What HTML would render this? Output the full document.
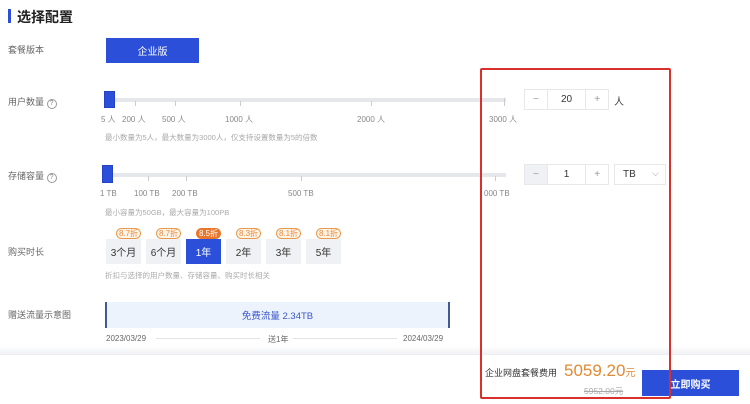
<!DOCTYPE html>
<html><head><meta charset="utf-8"><style>
*{margin:0;padding:0;box-sizing:border-box}
body{width:750px;height:404px;background:#fff;font-family:"Liberation Sans","Noto Sans CJK SC",sans-serif;position:relative;overflow:hidden;color:#333}
.a{position:absolute;white-space:nowrap}
.lbl{font-size:9px;color:#666}
.tk{position:absolute;width:1px;height:5px;background:#ccc}
.tl{font-size:8px;color:#888}
.hint{font-size:7.5px;color:#aaa}
.trk{position:absolute;height:4px;background:#e6e7ea}
.th{position:absolute;background:#2b4fd8;border:1px solid #2244c4}
.st{position:absolute;border:1px solid #e8e8ea;height:21px;display:flex;font-size:10px;color:#333}
.st div{display:flex;align-items:center;justify-content:center;border-right:1px solid #e8e8ea}
.st div:last-child{border-right:none}
.box{position:absolute;top:239px;width:35px;height:25px;background:#f0f1f4;font-size:10px;display:flex;align-items:center;justify-content:center;color:#333}
.bd{position:absolute;top:228px;height:11px;width:25px;border:1px solid #e89a4c;border-radius:6px;background:#fff4e8;color:#e8893a;font-size:8px;display:flex;align-items:center;justify-content:center}
</style></head><body>
<div class="a" style="left:8px;top:9px;width:3px;height:14px;background:#2b4fd8"></div>
<div class="a" style="left:17px;top:7px;font-size:14px;color:#222;font-weight:bold">选择配置</div>

<div class="a lbl" style="left:8px;top:43px">套餐版本</div>
<div class="a" style="left:106px;top:38px;width:93px;height:25px;background:#2b4fd8;color:#fff;font-size:10px;display:flex;align-items:center;justify-content:center">企业版</div>

<div class="a lbl" style="left:8px;top:95px">用户数量 <span style="display:inline-block;width:10px;height:10px;border:1px solid #999;border-radius:50%;font-size:7px;text-align:center;line-height:8px;color:#888">?</span></div>
<div class="trk" style="left:104px;top:98px;width:402px"></div>
<div class="th" style="left:104px;top:91px;width:11px;height:17px"></div>
<div class="tk" style="left:135px;top:101px"></div><div class="tk" style="left:175px;top:101px"></div><div class="tk" style="left:240px;top:101px"></div><div class="tk" style="left:371px;top:101px"></div><div class="tk" style="left:504px;top:98px;height:8px"></div>
<div class="a tl" style="left:101px;top:114px">5 人</div><div class="a tl" style="left:122px;top:114px">200 人</div><div class="a tl" style="left:162px;top:114px">500 人</div><div class="a tl" style="left:225px;top:114px">1000 人</div><div class="a tl" style="left:357px;top:114px">2000 人</div><div class="a tl" style="left:489px;top:114px">3000 人</div>
<div class="a hint" style="left:105px;top:132px">最小数量为5人，最大数量为3000人，仅支持设置数量为5的倍数</div>

<div class="st" style="left:524px;top:89px;width:85px"><div style="width:23px;color:#999">−</div><div style="width:39px">20</div><div style="width:22px;color:#999">+</div></div>
<div class="a" style="left:614px;top:93px;font-size:10px;color:#444">人</div>

<div class="a lbl" style="left:8px;top:169px">存储容量 <span style="display:inline-block;width:10px;height:10px;border:1px solid #999;border-radius:50%;font-size:7px;text-align:center;line-height:8px;color:#888">?</span></div>
<div class="trk" style="left:102px;top:173px;width:404px"></div>
<div class="th" style="left:102px;top:165px;width:11px;height:18px"></div>
<div class="tk" style="left:148px;top:176px"></div><div class="tk" style="left:186px;top:176px"></div><div class="tk" style="left:301px;top:176px"></div><div class="tk" style="left:495px;top:176px"></div>
<div class="a tl" style="left:100px;top:189px">1 TB</div><div class="a tl" style="left:134px;top:189px">100 TB</div><div class="a tl" style="left:172px;top:189px">200 TB</div><div class="a tl" style="left:288px;top:189px">500 TB</div><div class="a tl" style="left:484px;top:189px">000 TB</div>
<div class="a hint" style="left:105px;top:207px">最小容量为50GB，最大容量为100PB</div>

<div class="st" style="left:524px;top:164px;width:85px"><div style="width:23px;color:#999;background:#f0f1f4">−</div><div style="width:39px">1</div><div style="width:22px;color:#999">+</div></div>
<div class="a" style="left:614px;top:164px;width:52px;height:21px;border:1px solid #e8e8ea;font-size:10px;padding-left:8px;line-height:19px">TB<span style="position:absolute;right:6px;top:-1px;color:#999;font-size:9px">⌵</span></div>

<div class="a lbl" style="left:8px;top:245px">购买时长</div>
<div class="box" style="left:106px">3个月</div><div class="box" style="left:146px">6个月</div><div class="box" style="left:186px;background:#2b4fd8;color:#fff">1年</div><div class="box" style="left:226px">2年</div><div class="box" style="left:266px">3年</div><div class="box" style="left:306px">5年</div>
<div class="bd" style="left:116px">8.7折</div><div class="bd" style="left:156px">8.7折</div><div class="bd" style="left:196px;background:#e8762a;color:#fff;border-color:#e8762a">8.5折</div><div class="bd" style="left:236px">8.3折</div><div class="bd" style="left:276px">8.1折</div><div class="bd" style="left:316px">8.1折</div>
<div class="a hint" style="left:105px;top:270px">折扣与选择的用户数量、存储容量、购买时长相关</div>

<div class="a lbl" style="left:8px;top:308px">赠送流量示意图</div>
<div class="a" style="left:105px;top:302px;width:345px;height:26px;background:#edf3fd;border-left:2px solid #44598f;border-right:2px solid #44598f;color:#3a56c8;font-size:9.5px;display:flex;align-items:center;justify-content:center">免费流量 2.34TB</div>
<div class="a tl" style="left:106px;top:334px;color:#666">2023/03/29</div>
<div class="a" style="left:156px;top:338px;width:104px;height:1px;background:#e3e3e3"></div>
<div class="a tl" style="left:268px;top:334px;color:#666">送1年</div>
<div class="a" style="left:293px;top:338px;width:104px;height:1px;background:#e3e3e3"></div>
<div class="a tl" style="left:403px;top:334px;color:#666">2024/03/29</div>

<div class="a" style="left:0;top:346px;width:750px;height:8px;background:linear-gradient(#fff,#f1f2f5)"></div>
<div class="a" style="left:0;top:354px;width:750px;height:1px;background:#eceef2"></div>

<div class="a" style="left:485px;top:366px;font-size:9px;color:#333">企业网盘套餐费用</div>
<div class="a" style="left:564px;top:361px;font-size:17px;color:#e08a35">5059.20<span style="font-size:10px">元</span></div>
<div class="a" style="left:584px;top:385px;font-size:8.5px;color:#aaa;text-decoration:line-through">5952.00元</div>
<div class="a" style="left:642px;top:370px;width:97px;height:26px;background:#2b4fd8;color:#fff;font-size:10px;display:flex;align-items:center;justify-content:center;font-weight:bold">立即购买</div>

<div class="a" style="left:480px;top:68px;width:191px;height:331px;border:2px solid #d8302c;border-radius:2px"></div>
</body></html>
